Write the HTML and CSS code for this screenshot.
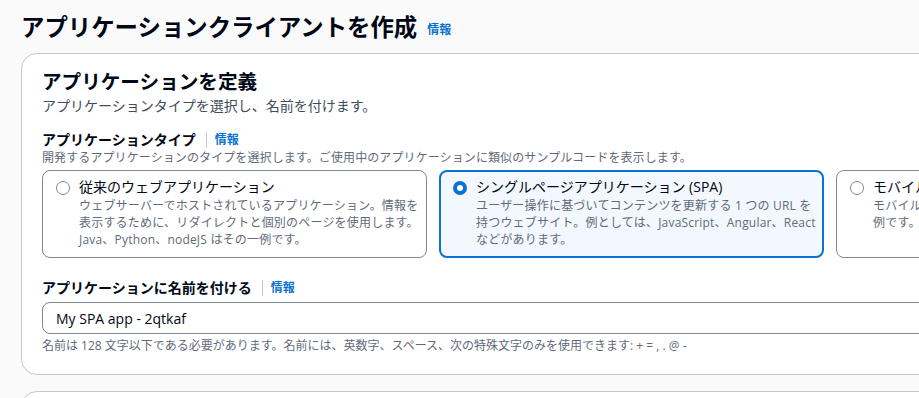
FILE: index.html
```html
<!DOCTYPE html>
<html lang="ja">
<head>
    <meta charset="UTF-8">
    <title>アプリケーションクライアントを作成</title>
    <link rel="stylesheet" href="styles.css">
</head>
<body>
    <div class="page">
        <h1 class="page-title">アプリケーションクライアントを作成 <a href="#" class="info">情報</a></h1>

        <div class="panel">
            <h2 class="panel-title">アプリケーションを定義</h2>
            <p class="panel-desc">アプリケーションタイプを選択し、名前を付けます。</p>

            <div class="field">
                <div class="field-label">
                    <span>アプリケーションタイプ</span>
                    <span class="divider"></span>
                    <a href="#" class="info">情報</a>
                </div>
                <div class="field-desc">開発するアプリケーションのタイプを選択します。ご使用中のアプリケーションに類似のサンプルコードを表示します。</div>
                <div class="tiles">
                    <label class="tile">
                        <span class="radio"></span>
                        <span class="tile-body">
                            <span class="tile-title">従来のウェブアプリケーション</span>
                            <span class="tile-desc">ウェブサーバーでホストされているアプリケーション。情報を<br>表示するために、リダイレクトと個別のページを使用します。<br>Java、Python、nodeJS はその一例です。</span>
                        </span>
                    </label>
                    <label class="tile selected">
                        <span class="radio"></span>
                        <span class="tile-body">
                            <span class="tile-title">シングルページアプリケーション (SPA)</span>
                            <span class="tile-desc">ユーザー操作に基づいてコンテンツを更新する 1 つの URL を<br>持つウェブサイト。例としては、JavaScript、Angular、React<br>などがあります。</span>
                        </span>
                    </label>
                    <label class="tile">
                        <span class="radio"></span>
                        <span class="tile-body">
                            <span class="tile-title">モバイルアプリ</span>
                            <span class="tile-desc">モバイルデバイス向けに構築されたアプリケーション。iOS などがその<br>例です。</span>
                        </span>
                    </label>
                </div>
            </div>

            <div class="field">
                <div class="field-label">
                    <span>アプリケーションに名前を付ける</span>
                    <span class="divider"></span>
                    <a href="#" class="info">情報</a>
                </div>
                <input type="text" class="text-input" value="My SPA app - 2qtkaf">
                <div class="field-hint">名前は 128 文字以下である必要があります。名前には、英数字、スペース、次の特殊文字のみを使用できます: + = , . @ -</div>
            </div>
        </div>

        <div class="panel next"></div>
    </div>
</body>
</html>
```

FILE: styles.css
```css
body {
    margin: 0;
    background-color: #fafafa;
    font-family: 'Open Sans', 'Noto Sans CJK JP', sans-serif;
    color: #000716;
    overflow: hidden;
}
.page {
    padding: 8px 0 0 21px;
    width: 1300px;
}
.page-title {
    margin: 0;
    font-size: 23.4px;
    font-weight: 700;
    line-height: 32px;
    display: flex;
    align-items: center;
}
.info {
    color: #0972d3;
    font-size: 12px;
    font-weight: 700;
    text-decoration: none;
}
.page-title .info {
    margin-left: 10px;
    margin-top: 6px;
}
.panel {
    background: #fff;
    border: 1px solid #c6c6cd;
    border-radius: 16px;
    margin-top: 7px;
    padding: 14px 20px 20px 20px;
}
.panel.next {
    margin-top: 16px;
    height: 40px;
    padding: 0;
}
.panel-title {
    margin: 0;
    font-size: 19.6px;
    font-weight: 700;
    line-height: 28px;
}
.panel-desc {
    margin: 0;
    font-size: 14px;
    line-height: 20px;
    color: #414d5c;
}
.field {
    margin-top: 14px;
}
.field + .field {
    margin-top: 20px;
}
.field-label {
    display: flex;
    align-items: center;
    font-size: 14px;
    font-weight: 700;
    line-height: 20px;
}
.divider {
    width: 1px;
    height: 16px;
    background: #c6c6cd;
    margin: 0 8px 0 10px;
}
.field-desc, .field-hint {
    font-size: 12px;
    letter-spacing: 0.1px;
    line-height: 16px;
    color: #5f6b7a;
}
.field-hint {
    margin-top: 4px;
    letter-spacing: 0;
}
.tiles {
    display: flex;
    gap: 12px;
    margin-top: 4px;
}
.tile {
    width: 385px;
    box-sizing: border-box;
    height: 88px;
    border: 1px solid #7d8998;
    border-radius: 8px;
    display: flex;
    padding: 6px 4px 6px 13px;
    flex-shrink: 0;
    overflow: hidden;
}
.tile.selected {
    border: 2px solid #0972d3;
    background: #f2f8fd;
    padding: 5px 3px 5px 12px;
}
.radio {
    width: 14px;
    height: 14px;
    box-sizing: border-box;
    border: 1.5px solid #7d8998;
    border-radius: 50%;
    background: #fff;
    margin: 4px 9px 0 0;
    flex-shrink: 0;
}
.selected .radio {
    border: 4px solid #0972d3;
}
.tile-body {
    display: flex;
    flex-direction: column;
    white-space: nowrap;
}
.tile-title {
    font-size: 14px;
    line-height: 20px;
}
.tile-desc {
    font-size: 12px;
    letter-spacing: 0.2px;
    line-height: 17px;
    color: #5f6b7a;
}
.text-input {
    display: block;
    width: 1000px;
    height: 32px;
    box-sizing: border-box;
    margin-top: 4px;
    border: 1px solid #7d8998;
    border-radius: 8px;
    padding: 0 13px;
    font-family: 'Open Sans', 'Noto Sans CJK JP', sans-serif;
    font-size: 14px;
    color: #000716;
}
```
